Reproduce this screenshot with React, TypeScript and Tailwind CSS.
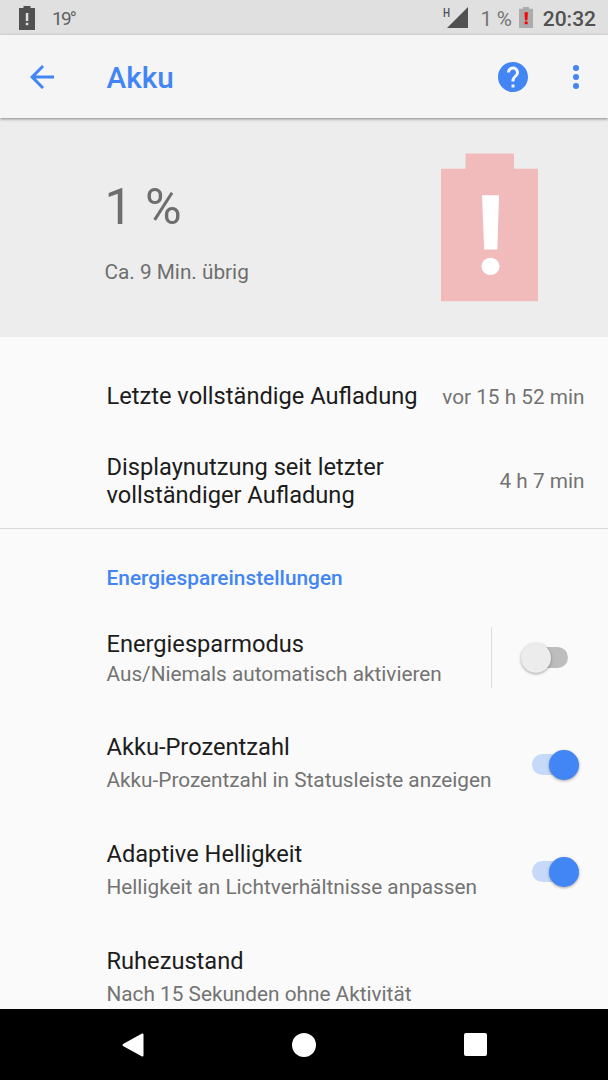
import { useState } from 'react';
import { clsx } from 'clsx';

function StatusBattery({ low }: { low?: boolean }) {
	return (
		<svg
			width="16"
			height="24"
			viewBox="0 0 16 24"
			className={low ? 'h-[21px] w-[14px]' : 'h-[24px] w-[16px]'}
			preserveAspectRatio="none"
		>
			<path d="M0 2H4.5V0H11.5V2H16V24H0Z" fill={low ? '#acacac' : '#515151'} />
			{low ? (
				<path d="M6.3 6H10.1L9.6 15H6.8ZM6.5 16.5H9.9V19.8H6.5Z" fill="#ff0000" />
			) : (
				<path d="M6.8 7H9.3V15H6.8ZM6.8 16.7H9.3V19.2H6.8Z" fill="#e0e0e0" />
			)}
		</svg>
	);
}

function StatusBar() {
	return (
		<div className="flex h-[35px] shrink-0 items-center bg-[#e0e0e0] pr-[12px] pl-[19px] text-[#515151]">
			<StatusBattery />
			<span className="ml-[17px] pt-[2px] text-[19px] leading-[24px] tracking-[-1.8px] text-[#606060]">
				19°
			</span>
			<div className="ml-auto flex items-center">
				<span className="-mt-[10px] w-[8px] origin-left scale-x-80 text-[12.5px] leading-[14px] font-medium">
					H
				</span>
				<svg width="21" height="21" viewBox="0 0 21 21" className="-ml-[4px]">
					<path d="M21 0V21H0Z" fill="#515151" />
				</svg>
				<span className="ml-[12px] pt-[2px] text-[20.7px] leading-[24px] tracking-[-0.2px] text-[#757575]">
					1 %
				</span>
				<div className="ml-[7px]">
					<StatusBattery low />
				</div>
				<span className="ml-[10px] pt-[2px] text-[21px] leading-[24px] font-medium">20:32</span>
			</div>
		</div>
	);
}

function AppBar() {
	return (
		<header className="relative z-10 flex h-[83px] shrink-0 items-center bg-[#f5f5f5] px-[29.5px] shadow-[0_1px_3px_rgba(0,0,0,0.45)]">
			<button type="button" aria-label="Zurück">
				<svg width="24" height="24" viewBox="4 4 16 16">
					<path
						d="M20 11H7.83l5.59-5.59L12 4l-8 8 8 8 1.41-1.41L7.83 13H20v-2z"
						fill="#4285f4"
					/>
				</svg>
			</button>
			<h1 className="ml-[53px] pt-[2px] text-[29.7px] leading-[36px] font-medium text-[#4285f4]">
				Akku
			</h1>
			<button type="button" aria-label="Hilfe" className="ml-auto">
				<svg width="30" height="30" viewBox="2 2 20 20">
					<path
						d="M12 2C6.48 2 2 6.48 2 12s4.48 10 10 10 10-4.48 10-10S17.52 2 12 2zm1 17h-2v-2h2v2zm2.07-7.75l-.9.92C13.45 12.9 13 13.5 13 15h-2v-.5c0-1.1.45-2.1 1.17-2.83l1.24-1.26c.37-.36.59-.86.59-1.41 0-1.1-.9-2-2-2s-2 .9-2 2H8c0-2.21 1.79-4 4-4s4 1.79 4 4c0 .88-.36 1.68-.93 2.25z"
						fill="#4285f4"
					/>
				</svg>
			</button>
			<button type="button" aria-label="Mehr" className="ml-[44.5px]">
				<svg width="6" height="24" viewBox="0 0 6 24">
					<circle cx="3" cy="3" r="3" fill="#4285f4" />
					<circle cx="3" cy="12" r="3" fill="#4285f4" />
					<circle cx="3" cy="21" r="3" fill="#4285f4" />
				</svg>
			</button>
		</header>
	);
}

function BatterySummary() {
	return (
		<section className="flex h-[219px] justify-between bg-[#ededed] pt-[35px] pr-[70px] pl-[104.5px] text-[#6e6e6e]">
			<div className="pt-[25px]">
				<div className="text-[50px] leading-[58px]">1 %</div>
				<div className="mt-[24px] text-[20.75px] leading-[24px]">Ca. 9 Min. übrig</div>
			</div>
			<svg width="97" height="149" viewBox="0 0 97 149">
				<path d="M0 15.7H24.5V.5H73V15.7H97V148.3H0Z" fill="#f2bbbb" />
				<path d="M41 42.2H58L56.3 96.5H43.2Z" fill="#fff" />
				<ellipse cx="49.5" cy="113.3" rx="9" ry="8.6" fill="#fff" />
			</svg>
		</section>
	);
}

function Switch({ checked, onChange, label }: { checked: boolean; onChange: () => void; label: string }) {
	return (
		<button
			type="button"
			role="switch"
			aria-checked={checked}
			aria-label={label}
			onClick={onChange}
			className={clsx(
				'relative h-[21px] w-[44px] shrink-0 rounded-full',
				checked ? 'bg-[#c6d9f8]' : 'bg-[#bdbdbd]',
			)}
		>
			<span
				className={clsx(
					'absolute -top-[4.5px] size-[30px] rounded-full shadow-[0_1px_3px_rgba(0,0,0,0.35)]',
					checked ? '-right-[3px] bg-[#4285f4]' : '-left-[3px] bg-[#ececec]',
				)}
			/>
		</button>
	);
}

const TITLE = 'text-[23.65px] leading-[28px] text-[#1c1c1c]';
const SUMMARY = 'text-[20.77px] leading-[24px] text-[#737373]';

const SETTINGS = [
	{ title: 'Akku-Prozentzahl', summary: 'Akku-Prozentzahl in Statusleiste anzeigen' },
	{ title: 'Adaptive Helligkeit', summary: 'Helligkeit an Lichtverhältnisse anpassen' },
];

function NavBar() {
	return (
		<nav className="flex h-[71px] shrink-0 items-center bg-black pl-[122px]">
			<svg width="22" height="24" viewBox="0 0 22 24">
				<path
					d="M1.5 12L20.5 1.5V22.5Z"
					fill="#fff"
					stroke="#fff"
					strokeWidth="2"
					strokeLinejoin="round"
				/>
			</svg>
			<div className="ml-[148px] size-[24px] rounded-full bg-white" />
			<div className="ml-[147.5px] size-[23px] rounded-[2px] bg-white" />
		</nav>
	);
}

export default function App() {
	const [saver, setSaver] = useState(false);
	const [enabled, setEnabled] = useState([true, true]);

	const toggle = (index: number) =>
		setEnabled((prev) => prev.map((value, i) => (i === index ? !value : value)));

	return (
		<div className="flex h-[1080px] w-[608px] flex-col overflow-hidden bg-[#fafafa] font-['Roboto',sans-serif]">
			<StatusBar />
			<AppBar />
			<main className="min-h-0 flex-1 overflow-hidden">
				<BatterySummary />

				<section className="h-[192px] border-b border-[#d8d8d8] pt-[16px] pr-[23.5px] pl-[106.5px]">
					<div className="flex h-[86px] items-center justify-between">
						<div className={TITLE}>Letzte vollständige Aufladung</div>
						<div className={clsx(SUMMARY, 'pt-[2px]')}>vor 15 h 52 min</div>
					</div>
					<div className="flex h-[84px] items-center justify-between">
						<div className={TITLE}>
							Displaynutzung seit letzter
							<br />
							vollständiger Aufladung
						</div>
						<div className={clsx(SUMMARY, 'pb-[1px]')}>4 h 7 min</div>
					</div>
				</section>

				<section className="pl-[106.5px]">
					<h2 className="h-[75px] pt-[37px] text-[20.85px] leading-[24px] font-medium text-[#4285f4]">
						Energiespareinstellungen
					</h2>
					<div className="flex h-[107px] items-center justify-between pr-[40.5px]">
						<div className="pt-[1px]">
							<div className={TITLE}>Energiesparmodus</div>
							<div className={clsx(SUMMARY, 'mt-[4px]')}>Aus/Niemals automatisch aktivieren</div>
						</div>
						<div className="flex h-[61px] items-center border-l border-[#dcdcdc] pl-[32px]">
							<Switch checked={saver} onChange={() => setSaver(!saver)} label="Energiesparmodus" />
						</div>
					</div>
					{SETTINGS.map((item, index) => (
						<div key={item.title} className="flex h-[107px] items-center justify-between pr-[32px]">
							<div className="pb-[4px]">
								<div className={TITLE}>{item.title}</div>
								<div className={clsx(SUMMARY, 'mt-[7px]')}>{item.summary}</div>
							</div>
							<Switch checked={enabled[index]} onChange={() => toggle(index)} label={item.title} />
						</div>
					))}
					<div className="flex h-[107px] items-center">
						<div className="pb-[4px]">
							<div className={TITLE}>Ruhezustand</div>
							<div className={clsx(SUMMARY, 'mt-[7px]')}>Nach 15 Sekunden ohne Aktivität</div>
						</div>
					</div>
				</section>
			</main>
			<NavBar />
		</div>
	);
}
